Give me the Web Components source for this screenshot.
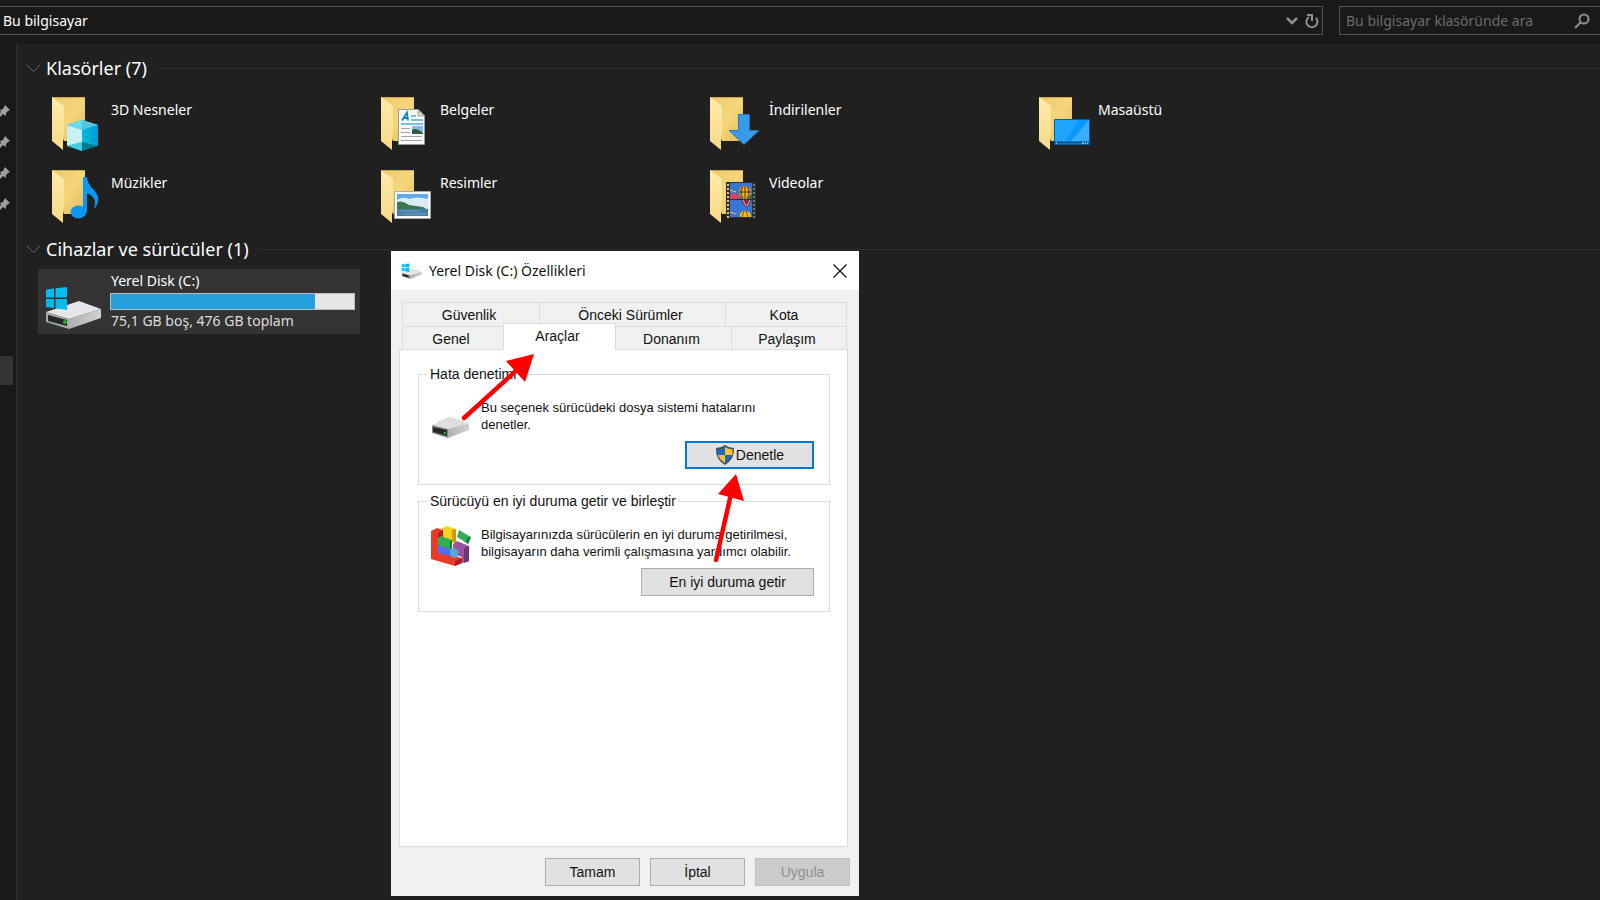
<!DOCTYPE html>
<html lang="tr">
<head>
<meta charset="utf-8">
<title>Bu bilgisayar</title>
<style>
  body {
    margin: 0;
    background: #191919;
    color: #fff;
    font: 14px/20px "Noto Sans", "Open Sans", sans-serif;
  }
</style>
</head>
<body>

<explorer-window>
  <address-bar slot="toolbar"></address-bar>
  <nav-strip slot="nav"></nav-strip>

  <item-group heading="Klasörler (7)">
    <folder-tile icon="objects">3D Nesneler</folder-tile>
    <folder-tile icon="documents">Belgeler</folder-tile>
    <folder-tile icon="downloads">İndirilenler</folder-tile>
    <folder-tile icon="desktop">Masaüstü</folder-tile>
    <folder-tile icon="music">Müzikler</folder-tile>
    <folder-tile icon="pictures">Resimler</folder-tile>
    <folder-tile icon="videos">Videolar</folder-tile>
  </item-group>
  <item-group heading="Cihazlar ve sürücüler (1)">
    <drive-tile used="84" info="75,1 GB boş, 476 GB toplam">Yerel Disk (C:)</drive-tile>
  </item-group>
</explorer-window>

<properties-dialog heading="Yerel Disk (C:) Özellikleri">
  <tab-row slot="tabs" tabs="Güvenlik,Önceki Sürümler,Kota" columns="137fr 186fr 122fr"></tab-row>
  <tab-row slot="tabs" tabs="Genel,Araçlar,Donanım,Paylaşım" columns="101fr 112fr 116fr 116fr" active="Araçlar"></tab-row>

  <tool-group heading="Hata denetimi" icon="drive">
    Bu seçenek sürücüdeki dosya sistemi hatalarını<br>denetler.
    <push-button slot="action" class="check" shield focused>Denetle</push-button>
  </tool-group>
  <tool-group heading="Sürücüyü en iyi duruma getir ve birleştir" icon="defrag">
    Bilgisayarınızda sürücülerin en iyi duruma getirilmesi,<br>bilgisayarın daha verimli çalışmasına yardımcı olabilir.
    <push-button slot="action" class="optimize">En iyi duruma getir</push-button>
  </tool-group>

  <push-button slot="buttons">Tamam</push-button>
  <push-button slot="buttons">İptal</push-button>
  <push-button slot="buttons" disabled>Uygula</push-button>
</properties-dialog>

<script>
// icons.js

const FOLDER = `
  <path d="M8 9H41V53H20L14 40Z" fill="url(#back)"/>
  <path d="M8 9H41V10H9Z" fill="#c9a751"/>
  <path d="M8 9L20 18V45L19 47V62L8 53Z" fill="url(#flap)"/>`;

const DRIVE = `
  <path d="M2 43L35 32L57 40L25 50Z" fill="#e6e6ea"/>
  <path d="M25 50L57 40V49L25 60Z" fill="url(#side)"/>
  <path d="M2 43L25 50V60L2 53Z" fill="#a7a9ac"/>
  <path d="M4 46L23 51V57L4 52Z" fill="#252827"/>
  <circle cx="21" cy="53" r="2" fill="#20b52b"/>`;

const WINDOWS = `
  <path d="M2 20.500L10 19.500V28.500H2ZM11.500 19.300L23 18V28.500H11.500ZM2 30H10V39L2 38ZM11.500 30H23V41L11.500 39.300Z" fill="#00bcf2"/>`;

const BALLOON = `
  <path d="M41 7a6 6 0 0 1 6 6q0 3-4 7h-4q-4-4-4-7a6 6 0 0 1 6-6Z" fill="#e8c51a"/>
  <path d="M39 7.500q-4 5 0 12M43 7.500q4 5 0 12" fill="none" stroke="#b5301c" stroke-width="1.500"/>
  <path d="M41 7V20M35 13H47" stroke="#32381b" stroke-width="1"/>`;

const ICONS = {
  objects: FOLDER + `
    <path d="M38 32L54 37V57L38 63L23 57V37Z" fill="#00a5dc"/>
    <path d="M38 32L54 37L38 42L23 37Z" fill="#68dcec"/>
    <path d="M38 32L54 37L38 42Z" fill="#4fc6e2"/>
    <path d="M23 37L38 42V54L23 58Z" fill="#c9f1f3"/>
    <path d="M38 42L54 37V58L38 54Z" fill="url(#cube)"/>
    <path d="M38 54L54 58L38 63Z" fill="#00788f"/>
    <path d="M38 54L23 58L38 63Z" fill="#3bd0db"/>`,
  documents: FOLDER + `
    <path d="M25.500 21.500H45L51.500 28V56.500H25.500Z" fill="#fafafa" stroke="#9b9b9b"/>
    <path d="M45 21.500V28H51.500Z" fill="#d5d5d5" stroke="#a5a5a5"/>
    <path d="M29 32.500L34 24.500L35 32.500M31 30H35" fill="none" stroke="#1683c9" stroke-width="1.800"/>
    <path d="M38 28H43M38 32H50M28 36H50" stroke="#51a9dc" stroke-width="1.600"/>
    <path d="M28 40.500H37M28 44.500H37M28 48.500H49M28 52.500H49" stroke="#a4a4a4"/>
    <path d="M39 38H50V46H39Z" fill="#8bbbe9"/><path d="M39 42Q43 39 50 45V46H39Z" fill="#315944"/>`,
  downloads: FOLDER + `<path d="M36.500 26.500H47.500V42.500H57L42 56.500L27 42.500H36.500Z" fill="#399be8" stroke="#2878b8"/>`,
  desktop: FOLDER + `
    <path d="M23.500 31.500H58.500V56.500H23.500Z" fill="#1ca4ff" stroke="#075d96"/>
    <path d="M48 32H58V53L34 53Z" fill="#37aeff"/>
    <path d="M48 32L58 32L40 53H34Z" fill="#0a98fb"/>
    <path d="M24 54.500H58" stroke="#074f82" stroke-width="2"/>
    <path d="M25 55H26M51 55H53M54 55H55M56 55H57" stroke="#fff"/>`,
  music: FOLDER + `
    <ellipse cx="34.500" cy="51" rx="8" ry="6.500" fill="#0a96f4"/>
    <path d="M39 16H43Q43 22 50 29Q58 38 51 47H50Q54 37 43 32V51H39Z" fill="#0a96f4"/>`,
  pictures: FOLDER + `
    <path d="M21.500 30.500H57.500V57.500H21.500Z" fill="#f7f7f7" stroke="#aaa"/>
    <path d="M24 33H55V55H24Z" fill="#63a8e8"/>
    <path d="M24 39Q30 35 36 38Q44 35 55 38V49H24Z" fill="#dcecf6"/>
    <path d="M24 41Q30 39 36 44L50 46L55 49H24Z" fill="#3f7450"/>
    <path d="M24 48H55V55H24Z" fill="#457fa5"/>
    <path d="M27 50H46M30 53H53" stroke="#6fa0c2"/>`,
  videos: FOLDER + `
    <path d="M24 21H54V57H24Z" fill="#303030"/>
    <path d="M28 22H50V38H28ZM28 39H50V56H28Z" fill="#3975d5"/>
    <path d="M26 23V57" stroke="#edc66a" stroke-width="2" stroke-dasharray="2 2"/>
    <path d="M52 23V57" stroke="#737373" stroke-width="2" stroke-dasharray="2 2"/>
    <path d="M28 34Q33 29 38 36V38H28Z" fill="#d64168"/><path d="M28 29L34 31M28 51L34 53" stroke="#e9cd53"/>
    <path d="M38 38L41 34H50V38Z" fill="#28733b"/>
    <g transform="translate(2 18)">${BALLOON}</g>
    <path d="M39 39H50L46 46H43Z" fill="#7a246d"/><path d="M41 39L44 45M48 39L45 45" stroke="#e9d12c"/>
    <path d="M38 56Q37 50 43 50T49 56Z" fill="#e8c51a"/><path d="M40 56L42 50M46 56L44 50" stroke="#b5301c"/>`,
  system: DRIVE + WINDOWS
};

// shared gradients, each shadow root needs its own copy
const DEFS = `
  <defs>
    <linearGradient id="back" x2="1" y2="1"><stop stop-color="#ebc96c"/><stop offset=".5" stop-color="#f5d67b"/><stop offset="1" stop-color="#dfbb5c"/></linearGradient>
    <linearGradient id="flap" x2="0" y2="1"><stop stop-color="#ffeaac"/><stop offset="1" stop-color="#f9da86"/></linearGradient>
    <linearGradient id="side"><stop stop-color="#aeb0b2"/><stop offset="1" stop-color="#d2d2d4"/></linearGradient>
    <linearGradient id="cube"><stop stop-color="#00bdd9"/><stop offset="1" stop-color="#0096dc"/></linearGradient>
  </defs>`;

function render(el, html) {
  const template = document.createElement('template');
  template.innerHTML = html;
  el.attachShadow({ mode: 'open' }).appendChild(template.content.cloneNode(true));
}

class ShellIcon extends HTMLElement {
  connectedCallback() {
    render(this, `
      <style>
        :host { display: block; }
        svg { display: block; width: 100%; height: 100%; }
      </style>
      <svg viewBox="${this.getAttribute('view') || '0 0 60 65'}" aria-hidden="true">${DEFS}${ICONS[this.getAttribute('name')]}</svg>
    `);
  }
}

// explorer.js

class ExplorerWindow extends HTMLElement {
  connectedCallback() {
    render(this, `
      <style>
        :host { display: flex; flex-direction: column; min-height: 100vh; background: #191919; }
        .body { display: flex; flex: 1; }
        main { flex: 1; min-width: 0; background: #202020; border-left: 2px solid #292929; padding: 1px 0 0 8px; }
      </style>
      <slot name="toolbar"></slot>
      <div class="body">
        <slot name="nav"></slot>
        <main><slot></slot></main>
      </div>
    `);
  }
}

class AddressBar extends HTMLElement {
  connectedCallback() {
    render(this, `
      <style>
        :host { display: flex; gap: 16px; padding: 6px 0 9px; }
        .box { display: flex; align-items: center; box-sizing: border-box; height: 29px; border: 1px solid #535353; }
        .path { flex: 1; border-left: 0; }
        .search { width: 261px; border-right: 0; }
        input { flex: 1; min-width: 0; padding: 0 3px; border: 0; outline: 0; background: none; color: #fff; font: inherit; }
        .search input { padding: 0 6px; }
        input::placeholder { color: #6d6d6d; opacity: 1; }
        button { display: flex; padding: 0; border: 0; background: none; width: 20px; justify-content: center; }
        .search button { width: 36px; }
        svg { fill: none; stroke: #8f8f8f; }
      </style>
      <div class="box path">
        <input aria-label="Adres" value="Bu bilgisayar">
        <button aria-label="Önceki konumlar"><svg width="12" height="8" stroke-width="2.500"><path d="M1 1L6 6L11 1"/></svg></button>
        <button aria-label="Yenile"><svg width="14" height="16" stroke-width="2"><path d="M11 5A5.500 5.500 0 1 1 4 4M2 2H7V8"/></svg></button>
      </div>
      <div class="box search">
        <input aria-label="Ara" placeholder="Bu bilgisayar klasöründe ara">
        <button aria-label="Ara"><svg width="16" height="16" stroke-width="2"><circle cx="10" cy="6" r="4.500"/><path d="M7 9L1 15"/></svg></button>
      </div>
    `);
  }
}

class NavStrip extends HTMLElement {
  connectedCallback() {
    const pin = `<svg width="11" height="12"><path d="M5 0L10 5L8 6L6 8V11L3 9L0 12V8L1 7L0 5L3 4Z" fill="#98a0a5"/></svg>`;
    render(this, `
      <style>
        :host { display: block; width: 16px; padding-top: 61px; box-sizing: border-box; }
        .pins { display: grid; gap: 19px; }
        svg { display: block; }
        .current { width: 13px; height: 29px; margin-top: 146px; background: #333; }
      </style>
      <div class="pins">${pin.repeat(4)}</div>
      <div class="current"></div>
    `);
  }
}

class ItemGroup extends HTMLElement {
  connectedCallback() {
    render(this, `
      <style>
        :host { display: block; padding-top: 11px; }
        header { display: flex; align-items: center; }
        svg { fill: none; stroke: #666; }
        h2 { margin: 0 10px 0 5px; font-size: 18px; line-height: 24px; font-weight: 400; }
        hr { flex: 1; margin: 0; border: 0; border-top: 1px solid #2f2f2f; }
        .items { display: grid; grid-template-columns: repeat(auto-fill, 322px); gap: 8px 7px; padding: 8px 0 0 12px; }
      </style>
      <header>
        <svg width="15" height="9"><path d="M1 1L7.500 7.500L14 1"/></svg>
        <h2>${this.getAttribute('heading')}</h2>
        <hr>
      </header>
      <div class="items"><slot></slot></div>
    `);
  }
}

class FolderTile extends HTMLElement {
  connectedCallback() {
    render(this, `
      <style>
        :host { display: flex; gap: 7px; height: 65px; padding-left: 6px; box-sizing: border-box; }
        shell-icon { width: 60px; height: 65px; }
        .label { padding-top: 12px; }
      </style>
      <shell-icon name="${this.getAttribute('icon')}"></shell-icon>
      <span class="label"><slot></slot></span>
    `);
  }
}

class DriveTile extends HTMLElement {
  connectedCallback() {
    const used = this.getAttribute('used');
    render(this, `
      <style>
        :host { display: flex; gap: 6px; padding: 0 5px 0 6px; background: #333; }
        shell-icon { width: 60px; height: 65px; }
        .info { flex: 1; padding-top: 2px; }
        .text { padding-left: 1px; }
        .free { color: #ddd; }
        .bar { height: 15px; margin: 2px 0 1px; border: 1px solid #bcbcbc; background: #e6e6e6; }
        .fill { width: ${used}%; height: 100%; background: #26a0da; }
      </style>
      <shell-icon name="system"></shell-icon>
      <div class="info">
        <div class="text"><slot></slot></div>
        <div class="bar" role="meter" aria-valuenow="${used}" aria-label="Kullanılan alan"><div class="fill"></div></div>
        <div class="text free">${this.getAttribute('info')}</div>
      </div>
    `);
  }
}

// dialog.js

class PropertiesDialog extends HTMLElement {
  connectedCallback() {
    render(this, `
      <style>
        :host {
          position: absolute;
          left: 391px;
          top: 251px;
          display: flex;
          flex-direction: column;
          width: 468px;
          height: 645px;
          background: #f0f0f0;
          color: #111;
          font: 14px/17px "Liberation Sans", Arial, sans-serif;
        }
        .title { display: flex; align-items: center; height: 39px; padding: 0 12px 0 10px; background: #fff; font-family: "Noto Sans", sans-serif; }
        .title h1 { flex: 1; margin: 0 0 0 6px; font-size: 14px; line-height: 20px; font-weight: 400; }
        shell-icon { width: 22px; height: 18px; }
        .close { display: flex; padding: 0; border: 0; background: none; }
        .tabs { padding: 12px 12px 0 11px; }
        .panel { flex: 1; margin: -1px 11px 0 8px; padding: 16px 17px 0 18px; border: 1px solid #dcdcdc; background: #fff; }
        .buttons { display: flex; justify-content: flex-end; gap: 10px; padding: 11px 9px 10px; }
        ::slotted(tool-group) { margin-bottom: 8px; }
        /* pointer arrows drawn over the window */
        .arrows { position: absolute; left: 0; top: 0; pointer-events: none; fill: red; stroke: red; stroke-linecap: round; }
      </style>
      <div class="title">
        <shell-icon name="system" view="0 14 60 49"></shell-icon>
        <h1>${this.getAttribute('heading')}</h1>
        <button class="close" aria-label="Kapat"><svg width="14" height="14"><path d="M0.500 0.500L13.500 13.500M13.500 0.500L0.500 13.500" stroke="#111" stroke-width="1.300"/></svg></button>
      </div>
      <div class="tabs" role="tablist"><slot name="tabs"></slot></div>
      <div class="panel"><slot></slot></div>
      <div class="buttons"><slot name="buttons"></slot></div>
      <svg class="arrows" width="468" height="400" aria-hidden="true">
        <path d="M73 167L127 118" stroke-width="4.500"/>
        <path d="M143 103L115 110L134 131Z" stroke="none"/>
        <path d="M325 309L340 243" stroke-width="4.500"/>
        <path d="M345 223L327 243L353 250Z" stroke="none"/>
      </svg>
    `);
  }
}

class TabRow extends HTMLElement {
  connectedCallback() {
    const active = this.getAttribute('active');
    const tabs = this.getAttribute('tabs').split(',').map(name =>
      `<button role="tab" aria-selected="${name === active}">${name}</button>`).join('');
    render(this, `
      <style>
        :host { display: grid; grid-template-columns: ${this.getAttribute('columns')}; height: 24px; }
        button {
          min-width: 0;
          margin-right: -1px;
          padding: 1px 4px 0 0;
          border: 1px solid #dcdcdc;
          border-bottom: 0;
          background: #f0f0f0;
          color: inherit;
          font: inherit;
        }
        button:last-child { margin-right: 0; }
        button[aria-selected="true"] { position: relative; margin-top: -3px; padding: 0 4px 2px 0; background: #fff; }
      </style>
      ${tabs}
    `);
  }
}

const TOOL_ICONS = {
  drive: `
    <path d="M1 26L18 18L38 24L17 30Z" fill="#dfdfe1"/>
    <path d="M17 30L38 24V31L17 39Z" fill="url(#side)"/>
    <path d="M1 26L17 30V39L1 34Z" fill="#898b8c"/>
    <path d="M2 28L16 31V37L2 33Z" fill="#252827"/>
    <path d="M8 23L19 19L34 23" fill="none" stroke="#b5b5b5" stroke-dasharray="1 3"/>
    <circle cx="14" cy="34" r="1.300" fill="#20b52b"/>`,
  defrag: `
    <path d="M11 2L16 0L25 3V17L22 16L11 13Z" fill="#f6d323"/>
    <path d="M21 4L25 3V17L21 16Z" fill="#cf9b0a"/>
    <path d="M22 18L26 15L38 20V35L31 37V31L22 28Z" fill="#9b55a0"/>
    <path d="M33 22L38 20V35L33 37Z" fill="#713575"/>
    <path d="M0 5L6 2L12 4V12L7 14V26L31 32V37L24 40L0 33Z" fill="#e93b25"/>
    <path d="M7 7L12 4V12L7 14ZM24 35L31 32V37L24 40Z" fill="#b71c1c"/>
    <path d="M7 12L10 10L21 14V22L19 24L7 20Z" fill="#35ad51"/>
    <path d="M19 16L21 14V22L19 24Z" fill="#15762e"/>
    <path d="M7 19L19 23V30L7 27Z" fill="#526ef0"/>
    <path d="M19 24L22 22L27 24V30L24 32L19 30Z" fill="#55a7df"/>
    <path d="M28 4L40 11L37 18L26 11Z" fill="#35ad61"/>
    <path d="M40 11L37 18L35 16L37 11Z" fill="#147b38"/>`
};

class ToolGroup extends HTMLElement {
  connectedCallback() {
    render(this, `
      <style>
        :host { display: block; }
        fieldset { margin: 0; padding: 0; border: 1px solid #dcdcdc; min-width: 0; }
        legend { margin-left: 8px; padding: 0 3px; line-height: 17px; }
        .body { display: grid; grid-template-columns: 40px 1fr; gap: 8px 10px; padding: 16px 15px 15px 12px; }
        svg { grid-row: span 2; }
        .text { font-size: 13px; }
        .action { justify-self: end; }
      </style>
      <fieldset>
        <legend>${this.getAttribute('heading')}</legend>
        <div class="body">
          <svg width="40" height="40" aria-hidden="true">${DEFS}${TOOL_ICONS[this.getAttribute('icon')]}</svg>
          <div class="text"><slot></slot></div>
          <div class="action"><slot name="action"></slot></div>
        </div>
      </fieldset>
    `);
  }
}

class PushButton extends HTMLElement {
  connectedCallback() {
    const shield = `
      <svg width="20" height="20" viewBox="0 0 20 20" aria-hidden="true">
        <path d="M10 0Q14 3 19 3Q20 14 10 20Q0 14 1 3Q6 3 10 0Z" fill="#46535c"/>
        <path d="M10 2Q6 4 2.500 4.500V10H10Z" fill="#1769c5"/>
        <path d="M10 2Q14 4 17.500 4.500V10H10Z" fill="#ffc02d"/>
        <path d="M3 10H10V18Q4 14 3 10Z" fill="#ffc02d"/>
        <path d="M17 10H10V18Q16 14 17 10Z" fill="#1769c5"/>
      </svg>`;
    render(this, `
      <style>
        :host { display: block; width: 95px; }
        :host(.check) { width: 129px; }
        :host(.optimize) { width: 173px; }
        button {
          display: flex;
          align-items: center;
          justify-content: center;
          gap: 1px;
          box-sizing: border-box;
          width: 100%;
          height: 28px;
          padding: 0;
          border: 1px solid #adadad;
          background: #e1e1e1;
          color: #111;
          font: inherit;
        }
        :host([focused]) button { border: 2px solid #0078d7; }
        button:disabled { border-color: #bfbfbf; background: #ccc; color: #8f8f8f; }
      </style>
      <button ${this.hasAttribute('disabled') ? 'disabled' : ''}>${this.hasAttribute('shield') ? shield : ''}<slot></slot></button>
    `);
  }
}

customElements.define('shell-icon', ShellIcon);
customElements.define('explorer-window', ExplorerWindow);
customElements.define('address-bar', AddressBar);
customElements.define('nav-strip', NavStrip);
customElements.define('item-group', ItemGroup);
customElements.define('folder-tile', FolderTile);
customElements.define('drive-tile', DriveTile);
customElements.define('properties-dialog', PropertiesDialog);
customElements.define('tab-row', TabRow);
customElements.define('tool-group', ToolGroup);
customElements.define('push-button', PushButton);
</script>
</body>
</html>
